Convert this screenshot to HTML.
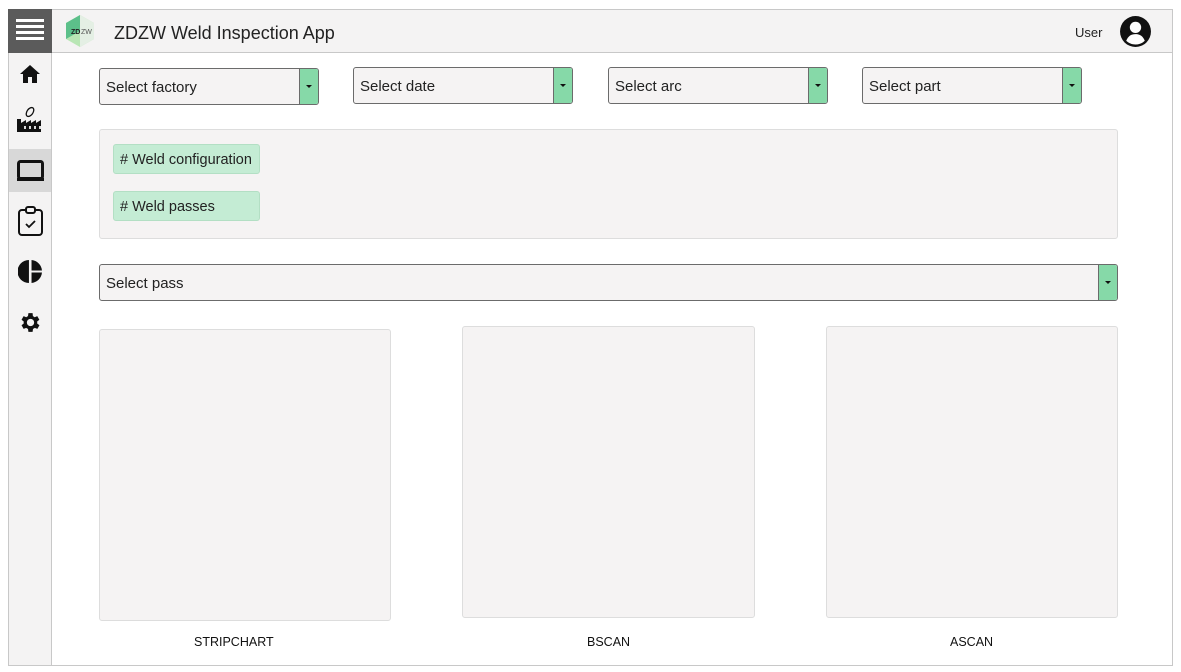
<!DOCTYPE html><html><head><style>
body{margin:0;width:1181px;height:672px;background:#fff;font-family:"Liberation Sans",Arial,sans-serif;position:relative;overflow:hidden}
.a{position:absolute;box-sizing:border-box}
.sel{position:absolute;box-sizing:border-box;height:37px;border:1px solid #6b6b6b;border-radius:3px;background:#f5f3f3;font-size:15px;color:#222;padding:10px 0 0 6px}
.sel .b{position:absolute;right:0;top:0;bottom:0;width:18px;background:#86d9a8;border-left:1px solid #6b6b6b;border-radius:0 2px 2px 0}
.sel .b:after{content:"";position:absolute;left:6px;top:16px;border:3px solid transparent;border-top:3px solid #111}
.chip{position:absolute;background:#c4ecd4;border:1px solid #b3dfc4;border-radius:3px;font-size:14.5px;color:#222;padding:7px 6px;box-sizing:border-box;width:147px;height:30px}
.box{position:absolute;background:#f5f3f3;border:1px solid #ddd;border-radius:3px;box-sizing:border-box}
.lbl{position:absolute;font-size:12.5px;color:#111;top:635px}
</style></head><body>
<div class="a" style="left:8px;top:9px;width:1165px;height:657px;border:1px solid #c8c8c8"></div>
<div class="a" style="left:8px;top:9px;width:1165px;height:44px;background:#f4f3f3;border:1px solid #c8c8c8"></div>
<div class="a" style="left:8px;top:9px;width:44px;height:657px;background:#f4f3f3;border:1px solid #c8c8c8"></div>
<div class="a" style="left:8px;top:9px;width:44px;height:44px;background:#5b5b5b;padding:10px 8px">
<div style="height:3px;background:#fff;margin-bottom:3px"></div><div style="height:3px;background:#fff;margin-bottom:3px"></div><div style="height:3px;background:#fff;margin-bottom:3px"></div><div style="height:3px;background:#fff"></div></div>
<svg class="a" style="left:64px;top:14px" width="32" height="34" viewBox="0 0 32 34"><polygon points="16,1 30,9 30,25 16,33 2,25 2,9" fill="#b9e6b5"/><polygon points="16,1 30,9 30,25 16,33" fill="#e4efe4"/><polygon points="2,9 16,1 16,17 2,25" fill="#5cc08a"/><text x="7" y="20" font-size="7" font-weight="bold" fill="#222" font-family="Liberation Sans">ZD</text><text x="17" y="20" font-size="7" fill="#555" font-family="Liberation Sans">ZW</text></svg>
<div class="a" style="left:114px;top:23px;font-size:18px;color:#222">ZDZW Weld Inspection App</div>
<div class="a" style="left:1075px;top:25px;font-size:13px;color:#222">User</div>
<svg class="a" style="left:1119px;top:15px" width="33" height="33" viewBox="0 0 32 32"><circle cx="16" cy="16" r="15" fill="#111"/><circle cx="16" cy="12" r="5.5" fill="#fff"/><path d="M7 25c2-5 5-6.5 9-6.5s7 1.5 9 6.5c-2.5 2.4-5.6 3.6-9 3.6s-6.5-1.2-9-3.6z" fill="#fff"/></svg>
<svg class="a" style="left:19px;top:64px" width="22" height="20" viewBox="0 0 22 20"><path d="M11 1 L21 10 H18 V19 H13 V13 H9 V19 H4 V10 H1 Z" fill="#111"/></svg>
<svg class="a" style="left:16px;top:105px" width="28" height="28" viewBox="0 0 28 28"><ellipse cx="14" cy="7" rx="3" ry="5" transform="rotate(35 14 7)" fill="none" stroke="#111" stroke-width="1.3"/><path d="M1 27V14h4v4l5-3v3l5-3v3l5-3v3l5-3v12z" fill="#111"/><path d="M8 21h2v3H8zM13 21h2v3h-2zM18 21h2v3h-2zM23 21h2v3h-2z" fill="#ddd"/></svg>
<div class="a" style="left:9px;top:149px;width:42px;height:43px;background:#d8d8d8"></div>
<svg class="a" style="left:17px;top:160px" width="27" height="22" viewBox="0 0 27 22"><rect x="1.5" y="1.5" width="24" height="17" rx="2" fill="none" stroke="#111" stroke-width="3"/><rect x="0" y="18" width="27" height="3" fill="#111"/></svg>
<svg class="a" style="left:17px;top:205px" width="27" height="32" viewBox="0 0 27 32"><rect x="2" y="5" width="23" height="25" rx="3" fill="none" stroke="#111" stroke-width="2"/><rect x="9" y="2" width="9" height="6" rx="2" fill="#f4f3f3" stroke="#111" stroke-width="2"/><path d="M9 19l3 3 6-6" fill="none" stroke="#111" stroke-width="1.8"/></svg>
<svg class="a" style="left:18px;top:259px" width="25" height="25" viewBox="0 0 24 24"><path d="M10.5 1A11 11 0 0 0 10.5 23Z" fill="#111"/><path d="M13 1A11 11 0 0 1 23 11H13Z" fill="#111"/><path d="M13 13H23A11 11 0 0 1 13 23Z" fill="#111"/></svg>
<svg class="a" style="left:18px;top:310px" width="25" height="25" viewBox="0 0 24 24"><path fill="#111" d="M19.4 13a7.6 7.6 0 0 0 0-2l2.1-1.6-2-3.5-2.5 1a7.5 7.5 0 0 0-1.7-1L15 3h-4l-.4 2.9a7.5 7.5 0 0 0-1.7 1l-2.5-1-2 3.5L6.5 11a7.6 7.6 0 0 0 0 2l-2.1 1.6 2 3.5 2.5-1a7.5 7.5 0 0 0 1.7 1L11 21h4l.4-2.9a7.5 7.5 0 0 0 1.7-1l2.5 1 2-3.5zM13 15.5a3.5 3.5 0 1 1 0-7 3.5 3.5 0 0 1 0 7z" transform="translate(-1 0)"/></svg>
<div class="sel" style="left:99px;top:68px;width:220px">Select factory<div class="b"></div></div>
<div class="sel" style="left:353px;top:67px;width:220px">Select date<div class="b"></div></div>
<div class="sel" style="left:608px;top:67px;width:220px">Select arc<div class="b"></div></div>
<div class="sel" style="left:862px;top:67px;width:220px">Select part<div class="b"></div></div>
<div class="box" style="left:99px;top:129px;width:1019px;height:110px"></div>
<div class="chip" style="left:113px;top:144px">#&nbsp;Weld configuration</div>
<div class="chip" style="left:113px;top:191px"># Weld passes</div>
<div class="sel" style="left:99px;top:264px;width:1019px">Select pass<div class="b"></div></div>
<div class="box" style="left:99px;top:329px;width:292px;height:292px"></div>
<div class="box" style="left:462px;top:326px;width:293px;height:292px"></div>
<div class="box" style="left:826px;top:326px;width:292px;height:292px"></div>
<div class="lbl" style="left:194px">STRIPCHART</div>
<div class="lbl" style="left:587px">BSCAN</div>
<div class="lbl" style="left:950px">ASCAN</div>
</body></html>
